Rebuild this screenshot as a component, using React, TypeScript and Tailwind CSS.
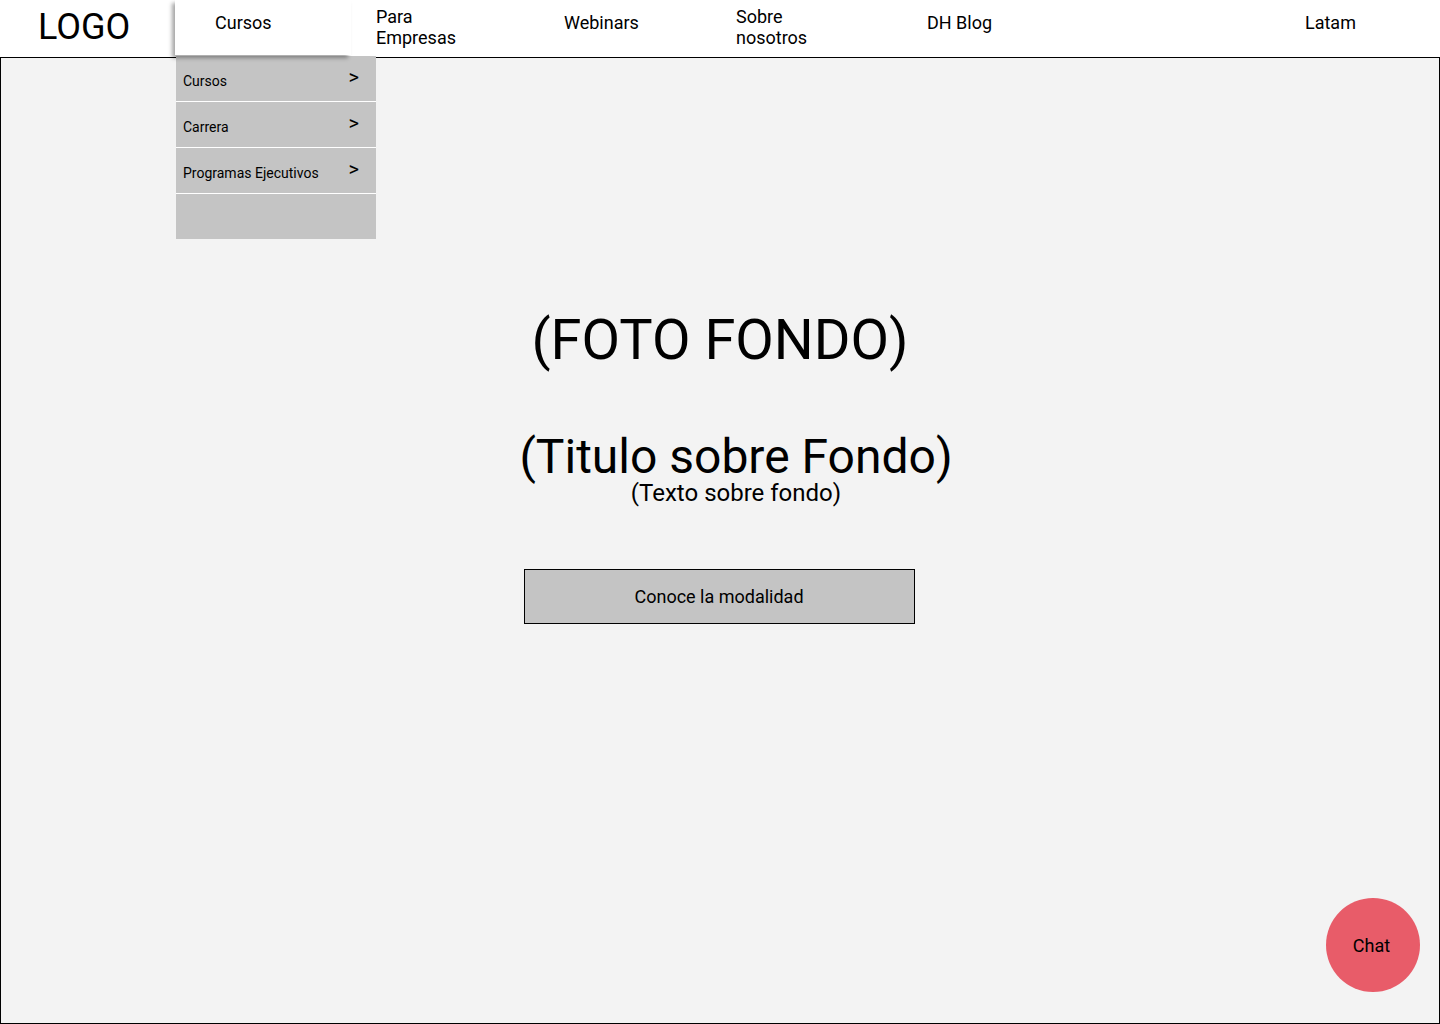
const navItems = [
  { label: ["Para", "Empresas"], width: "w-[188px]" },
  { label: ["Webinars"], width: "w-[172px]" },
  { label: ["Sobre", "nosotros"], width: "w-[191px]" },
  { label: ["DH Blog"], width: "flex-1" },
];

const menu = ["Cursos", "Carrera", "Programas Ejecutivos"];

export default function App() {
  return (
    <div
      className="relative w-[1440px] h-[1024px] flex flex-col bg-white text-black overflow-hidden"
      style={{ fontFamily: "Roboto, 'Liberation Sans', sans-serif" }}
    >
      <header className="h-[57px] flex items-stretch">
        <div className="w-[175px] pl-[38px] flex items-center text-[36px] leading-none pb-[3px]">LOGO</div>
        <div className="relative z-10 w-[176px] h-[55px] bg-white shadow-[-3px_3px_4px_rgba(0,0,0,0.35)] pl-10 pt-[12px] text-[18px] leading-[21px]">
          Cursos
        </div>
        <nav className="flex-1 flex items-start pl-[25px] text-[18px] leading-[21px]">
          {navItems.map((item) => (
            <div key={item.label[0]} className={`${item.width} ${item.label.length > 1 ? "pt-[6px]" : "pt-[12px]"}`}>
              {item.label.map((l) => (
                <div key={l}>{l}</div>
              ))}
            </div>
          ))}
          <div className="w-[135px] pt-[12px]">Latam</div>
        </nav>
      </header>

      <main className="flex-1 border border-black bg-[#f3f3f3] flex flex-col items-center">
        <h1 className="mt-[254px] text-[56px] leading-none font-normal">(FOTO FONDO)</h1>
        <div className="pl-8 mt-[65px] flex flex-col items-center">
          <h2 className="text-[48px] leading-none">(Titulo sobre Fondo)</h2>
          <p className="text-[24px] leading-none">(Texto sobre fondo)</p>
        </div>
        <button className="mt-[64px] -ml-[2px] w-[391px] h-[55px] border border-black bg-[#c4c4c4] text-[18px]">
          Conoce la modalidad
        </button>
      </main>

      <div className="absolute left-[176px] top-[56px] w-[200px] bg-[#c4c4c4]">
        {menu.map((m) => (
          <div key={m} className="h-[46px] border-b border-white flex items-center justify-between pl-[7px] pr-[17px] text-[14px]">
            <span className="pt-[5px]">{m}</span>
            <span className="text-[20px] -mt-[3px]">&gt;</span>
          </div>
        ))}
        <div className="h-[45px]" />
      </div>

      <button className="absolute left-[1326px] top-[898px] w-[94px] h-[94px] rounded-full bg-[#e85c69] text-[18px] pr-[3px]">
        Chat
      </button>
    </div>
  );
}
